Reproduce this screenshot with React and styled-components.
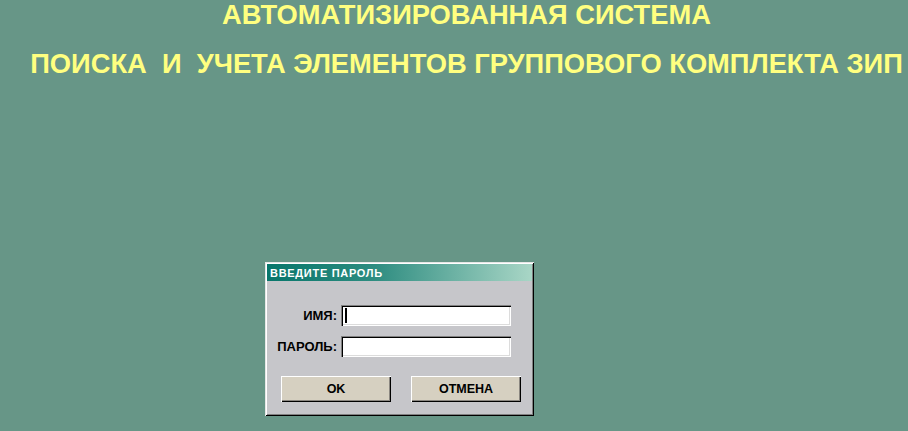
import React from "react";
import styled, { createGlobalStyle } from "styled-components";

const Global = createGlobalStyle`
  html, body { margin: 0; padding: 0; }
  body {
    background: #679687;
    font-family: "Liberation Sans", Arial, sans-serif;
    width: 908px;
    height: 431px;
    overflow: hidden;
  }
`;

const Page = styled.div`
  display: flex;
  flex-direction: column;
`;

const Header = styled.header`
  display: flex;
  flex-direction: column;
  align-items: center;
  gap: 19px;
  padding-left: 25px;
`;

const TitleLine = styled.h1`
  margin: 0;
  font-family: "Liberation Sans", Arial, sans-serif;
  font-weight: bold;
  font-size: 27.3px;
  line-height: 30px;
  color: #ffff80;
  white-space: pre;
`;

const Window = styled.div`
  margin: 183px 0 0 265px;
  width: 269px;
  height: 154px;
  box-sizing: border-box;
  padding: 2px;
  background: #c6c6ca;
  box-shadow: inset 1px 1px #e6e6e6, inset -1px -1px #000000,
    inset 2px 2px #ffffff, inset -2px -2px #808080;
  display: flex;
  flex-direction: column;
`;

const TitleBar = styled.div`
  height: 16px;
  display: flex;
  align-items: center;
  padding: 1px 0 0 3px;
  background: linear-gradient(90deg, #08766b 0%, #2d8c80 40%, #a9d6c6 100%);
  color: #ffffff;
  font-family: "Liberation Sans", Arial, sans-serif;
  font-weight: bold;
  font-size: 11px;
  letter-spacing: 0.7px;
`;

const Form = styled.div`
  display: grid;
  grid-template-columns: 70px 170px;
  grid-auto-rows: 21px;
  column-gap: 4px;
  row-gap: 10px;
  margin-top: 24px;
`;

const Label = styled.label`
  display: flex;
  align-items: center;
  justify-content: flex-end;
  font-family: "Liberation Sans", Arial, sans-serif;
  font-weight: bold;
  font-size: 13px;
  color: #000;
`;

const Field = styled.div`
  background: #ffffff;
  box-shadow: inset 1px 1px #808080, inset 2px 2px #000000,
    inset -1px -1px #ffffff, inset -2px -2px #dcdcdc;
  display: flex;
  align-items: center;
  padding-left: 4px;
`;

const Caret = styled.span`
  width: 2px;
  height: 15px;
  background: #000;
`;

const Buttons = styled.div`
  display: flex;
  gap: 20px;
  margin: 19px 0 0 14px;
`;

const Button = styled.button`
  width: 110px;
  height: 26px;
  border: none;
  padding: 0;
  background: #d6d0c1;
  box-shadow: inset 1px 1px #ffffff, inset -1px -1px #000000,
    inset -2px -2px #8a8680;
  font-family: "Liberation Sans", Arial, sans-serif;
  font-weight: bold;
  font-size: 12.5px;
  color: #000;
`;

export default function App() {
  return (
    <Page>
      <Global />
      <Header>
        <TitleLine>АВТОМАТИЗИРОВАННАЯ СИСТЕМА</TitleLine>
        <TitleLine>{"ПОИСКА  И  УЧЕТА ЭЛЕМЕНТОВ ГРУППОВОГО КОМПЛЕКТА ЗИП"}</TitleLine>
      </Header>
      <Window>
        <TitleBar>ВВЕДИТЕ ПАРОЛЬ</TitleBar>
        <Form>
          <Label>ИМЯ:</Label>
          <Field>
            <Caret />
          </Field>
          <Label>ПАРОЛЬ:</Label>
          <Field />
        </Form>
        <Buttons>
          <Button>OK</Button>
          <Button>ОТМЕНА</Button>
        </Buttons>
      </Window>
    </Page>
  );
}
